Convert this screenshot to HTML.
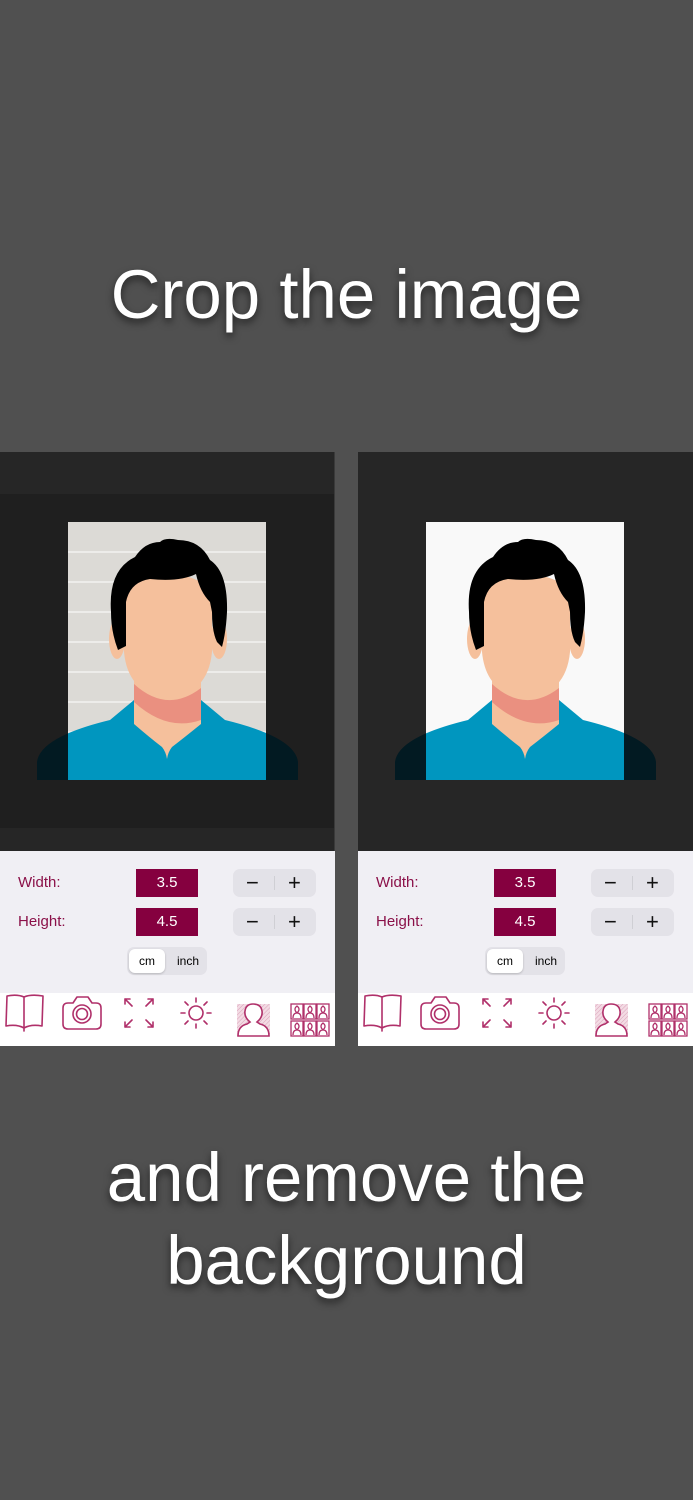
<!DOCTYPE html>
<html><head><meta charset="utf-8"><style>
body{margin:0;width:693px;height:1500px;background:#505050;position:relative;overflow:hidden;font-family:"Liberation Sans",Arial,sans-serif}
.t{position:absolute;left:0;width:693px;text-align:center;color:#fff;font-size:69px;text-shadow:0 4px 8px rgba(0,0,0,.55);white-space:nowrap;line-height:1}
.panel{position:absolute;top:452px;width:335px;height:594px;background:#262626;overflow:hidden}
.ctl{position:absolute;left:0;top:399px;width:335px;height:142px;background:#f0eff4}
.lab{position:absolute;left:18px;font-size:15px;color:#8a1048}
.val{position:absolute;left:136px;width:62px;height:28px;background:#85003f;color:#fff;font-size:15px;text-align:center;line-height:28px}
.st{position:absolute;left:233px;width:83px;height:28px;background:#e3e2e8;border-radius:7px}
.st:after{content:"";position:absolute;left:41px;top:7px;width:1px;height:14px;background:#cfcfd4}
.st span{position:absolute;top:0;line-height:27px;font-size:22px;color:#111}
.seg{position:absolute;left:127px;top:96px;width:80px;height:28px;background:#e3e2e8;border-radius:7px;font-size:12px}
.seg .a{position:absolute;left:2px;top:2px;width:36px;height:24px;background:#fff;border-radius:6px;box-shadow:0 1px 2px rgba(0,0,0,.2);text-align:center;line-height:24px;color:#000}
.seg .b{position:absolute;left:44px;top:2px;width:34px;text-align:center;line-height:24px;color:#000}
.tb{position:absolute;left:0;top:541px;width:335px;height:53px;background:#fff}
</style></head><body>
<div class="t" style="top:260px">Crop the image</div>
<div class="t" style="top:1143px">and remove the</div>
<div class="t" style="top:1226px">background</div>

<svg width="0" height="0" style="position:absolute">
<defs>
<clipPath id="photo"><rect x="68" y="70" width="198" height="258"/></clipPath>
<pattern id="hatch" width="3" height="3" patternUnits="userSpaceOnUse" patternTransform="rotate(45)"><rect width="3" height="3" fill="#f3dbe4"/><line x1="0" y1="0" x2="0" y2="3" stroke="#d9a0b8" stroke-width="1"/></pattern>
<path id="shirt" d="M37 328 L37 310 Q40 285 110 268 L134 248 L201 248 L225 268 Q295 285 298 310 L298 328 Z"/>
<g id="person">
<use href="#shirt" fill="#0096bf"/>
<path d="M134 226 L201 226 L201 272 Q185 285 172 295 Q168 300 167 307 Q166 300 162 295 Q149 285 134 272 Z" fill="#f5c09c"/>
<path d="M134 232 Q167 262 201 236 L201 268 Q167 280 134 250 Z" fill="#ea9080"/>
<ellipse cx="117" cy="187" rx="8" ry="20" fill="#f5c09c"/>
<ellipse cx="219" cy="187" rx="8" ry="20" fill="#f5c09c"/>
<path d="M123 150 Q122 125 168 122 Q213 125 212 150 L212 200 Q208 242 168 246 Q128 242 124 200 Z" fill="#f5c09c"/>
<path d="M111 160 Q108 118 135 105 Q145 90 160 90 Q165 85 178 88 Q200 88 210 108 Q228 120 227 160 Q226 180 222 195 L217 190 Q212 180 212 160 L210 150 Q200 140 196 122 Q180 130 150 127 Q130 130 126 150 L126 194 L118 198 Q111 180 111 160 Z" fill="#000"/>
</g>
<g id="tools" fill="none" stroke="#b0306a" stroke-width="1.6" stroke-linecap="round" stroke-linejoin="round">
<path d="M24 12 Q17 9 7 11 L6 41 Q17 39 24 43 Q31 39 42 41 L43 11 Q31 9 24 12 Z M24 12 L24 46"/>
<path d="M63 23 Q63 18 68 18 L73 18 L77 12 L88 12 L92 18 L96 18 Q101 18 101 23 L101 39 Q101 44 96 44 L68 44 Q63 44 63 39 Z"/>
<circle cx="82" cy="29" r="9"/><circle cx="82" cy="29" r="5.5"/>
<path d="M125 14 L132 21 M125 14 L125 19 M125 14 L130 14 M153 14 L146 21 M153 14 L148 14 M153 14 L153 19 M125 42 L132 35 M125 42 L125 37 M125 42 L130 42 M153 42 L146 35 M153 42 L148 42 M153 42 L153 37"/>
<circle cx="196" cy="28" r="7"/>
<path d="M196 13 L196 17 M196 39 L196 43 M181 28 L185 28 M207 28 L211 28 M185 17 L188 20 M204 36 L207 39 M207 17 L204 20 M188 36 L185 39"/>
</g>
</defs></svg>

<!-- LEFT PANEL -->
<div class="panel" style="left:0">
<svg width="335" height="399" style="position:absolute;left:0;top:0">
<rect width="335" height="399" fill="#262626"/>
<rect x="0" y="42" width="334" height="334" fill="#1f1f1f"/>
<use href="#shirt" fill="#021a22"/>
<rect x="68" y="70" width="198" height="258" fill="#dcdad6"/>
<g stroke="#f2f1ef" stroke-width="2" opacity=".8"><line x1="68" y1="100" x2="266" y2="100"/><line x1="68" y1="130" x2="266" y2="130"/><line x1="68" y1="160" x2="266" y2="160"/><line x1="68" y1="190" x2="266" y2="190"/><line x1="68" y1="220" x2="266" y2="220"/><line x1="68" y1="250" x2="266" y2="250"/><line x1="68" y1="280" x2="266" y2="280"/></g>
<use href="#person" clip-path="url(#photo)"/>
<rect x="334" y="0" width="1" height="399" fill="#3a3a3a"/>
</svg>
<div class="ctl">
<div class="lab" style="top:23px">Width:</div><div class="val" style="top:18px">3.5</div>
<div class="st" style="top:18px"><span style="left:13px">−</span><span style="left:55px">+</span></div>
<div class="lab" style="top:62px">Height:</div><div class="val" style="top:57px">4.5</div>
<div class="st" style="top:57px"><span style="left:13px">−</span><span style="left:55px">+</span></div>
<div class="seg"><div class="a">cm</div><div class="b">inch</div></div>
</div>
<div class="tb"><svg width="335" height="53">
<use href="#tools" transform="translate(0,-8)"/>
<rect x="237" y="11" width="33" height="32" fill="url(#hatch)"/>
<path d="M238 43 Q238 33 247 31 L250 29 Q244 24 245 18 Q246 11 253 11 Q261 11 262 18 Q263 24 257 29 L260 31 Q269 33 269 43 Z" fill="#fff" stroke="#b0306a" stroke-width="1.6"/>
<g fill="none" stroke="#b0306a" stroke-width="1.3"><rect x="291" y="11" width="12" height="15"/><rect x="304" y="11" width="12" height="15"/><rect x="317" y="11" width="12" height="15"/><rect x="291" y="28" width="12" height="15"/><rect x="304" y="28" width="12" height="15"/><rect x="317" y="28" width="12" height="15"/>
<path d="M293 25 Q293 20 297 20 Q293 16 297 13 Q301 16 297 20 Q301 20 301 25 M306 25 Q306 20 310 20 Q306 16 310 13 Q314 16 310 20 Q314 20 314 25 M319 25 Q319 20 323 20 Q319 16 323 13 Q327 16 323 20 Q327 20 327 25 M293 42 Q293 37 297 37 Q293 33 297 30 Q301 33 297 37 Q301 37 301 42 M306 42 Q306 37 310 37 Q306 33 310 30 Q314 33 310 37 Q314 37 314 42 M319 42 Q319 37 323 37 Q319 33 323 30 Q327 33 323 37 Q327 37 327 42"/></g>
</svg></div>
</div>

<!-- RIGHT PANEL -->
<div class="panel" style="left:358px">
<svg width="335" height="399" style="position:absolute;left:0;top:0">
<rect width="335" height="399" fill="#262626"/>
<use href="#shirt" fill="#021a22"/>
<rect x="68" y="70" width="198" height="258" fill="#f9f9f9"/>
<use href="#person" clip-path="url(#photo)"/>
</svg>
<div class="ctl">
<div class="lab" style="top:23px">Width:</div><div class="val" style="top:18px">3.5</div>
<div class="st" style="top:18px"><span style="left:13px">−</span><span style="left:55px">+</span></div>
<div class="lab" style="top:62px">Height:</div><div class="val" style="top:57px">4.5</div>
<div class="st" style="top:57px"><span style="left:13px">−</span><span style="left:55px">+</span></div>
<div class="seg"><div class="a">cm</div><div class="b">inch</div></div>
</div>
<div class="tb"><svg width="335" height="53">
<use href="#tools" transform="translate(0,-8)"/>
<rect x="237" y="11" width="33" height="32" fill="url(#hatch)"/>
<path d="M238 43 Q238 33 247 31 L250 29 Q244 24 245 18 Q246 11 253 11 Q261 11 262 18 Q263 24 257 29 L260 31 Q269 33 269 43 Z" fill="#fff" stroke="#b0306a" stroke-width="1.6"/>
<g fill="none" stroke="#b0306a" stroke-width="1.3"><rect x="291" y="11" width="12" height="15"/><rect x="304" y="11" width="12" height="15"/><rect x="317" y="11" width="12" height="15"/><rect x="291" y="28" width="12" height="15"/><rect x="304" y="28" width="12" height="15"/><rect x="317" y="28" width="12" height="15"/>
<path d="M293 25 Q293 20 297 20 Q293 16 297 13 Q301 16 297 20 Q301 20 301 25 M306 25 Q306 20 310 20 Q306 16 310 13 Q314 16 310 20 Q314 20 314 25 M319 25 Q319 20 323 20 Q319 16 323 13 Q327 16 323 20 Q327 20 327 25 M293 42 Q293 37 297 37 Q293 33 297 30 Q301 33 297 37 Q301 37 301 42 M306 42 Q306 37 310 37 Q306 33 310 30 Q314 33 310 37 Q314 37 314 42 M319 42 Q319 37 323 37 Q319 33 323 30 Q327 33 323 37 Q327 37 327 42"/></g>
</svg></div>
</div>
</body></html>
